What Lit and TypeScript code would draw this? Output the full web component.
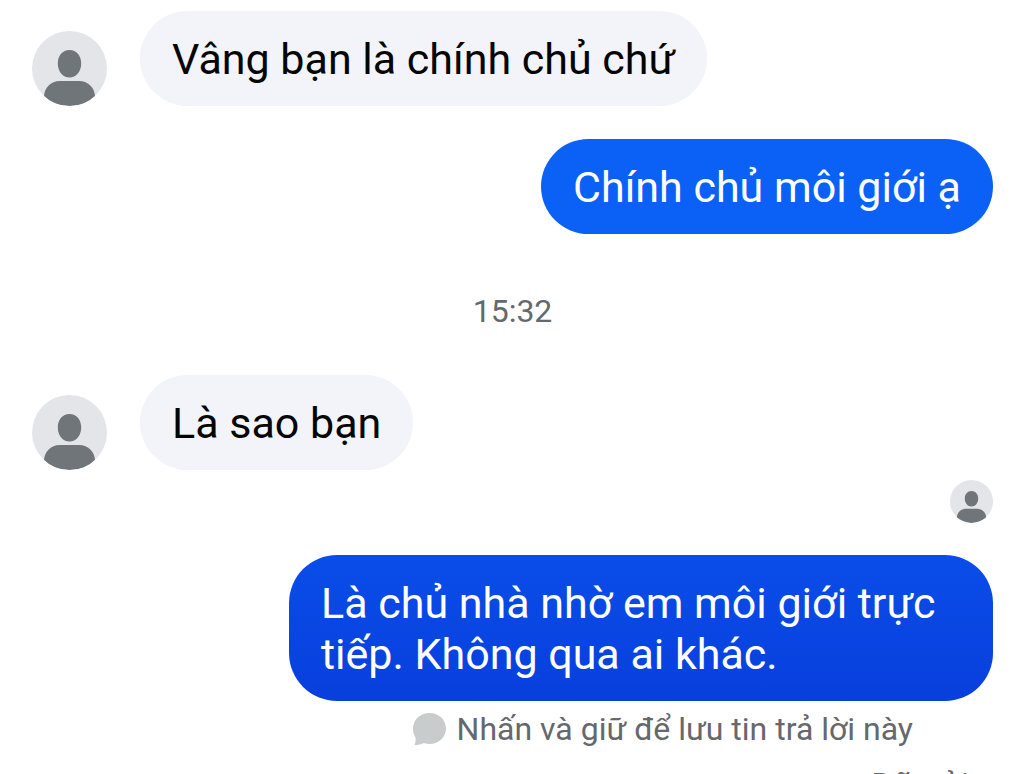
import { LitElement, html, css } from "lit";
import { customElement, property } from "lit/decorators.js";

@customElement("user-avatar")
export class UserAvatar extends LitElement {
  static styles = css`
    :host {
      display: block;
      flex: none;
      width: 75px;
      height: 75px;
      border-radius: 50%;
      overflow: hidden;
      background: #e3e5e9;
    }
    svg {
      display: block;
      width: 100%;
      height: 100%;
    }
  `;

  render() {
    return html`<svg viewBox="0 0 75 75" role="img" aria-label="Ảnh đại diện">
      <path
        fill="#70757a"
        d="M37.5 19c7 0 11.7 5.600 11.700 13.400 0 8-5 14-11.700 14s-11.700-6-11.700-14c0-7.800 4.700-13.400 11.700-13.400z"
      />
      <path
        fill="#70757a"
        d="M12 66C12 57 18.500 50 28 50H47C56.500 50 63 57 63 66C56 72 47 75 37.500 75S19 72 12 66z"
      />
    </svg>`;
  }
}

@customElement("chat-message")
export class ChatMessage extends LitElement {
  @property({ reflect: true }) side: "in" | "out" = "in";
  @property({ reflect: true }) tone = "";
  @property() text = "";

  static styles = css`
    :host {
      display: flex;
      align-items: flex-end;
      gap: 33px;
    }
    :host([side="out"]) {
      justify-content: flex-end;
    }
    .bubble {
      box-sizing: border-box;
      max-width: 704px;
      margin: 0;
      padding: 23px 32px 21px;
      border-radius: 48px;
      background: #f3f4f9;
      color: #050505;
      font-size: 43px;
      line-height: 51px;
    }
    :host([side="out"]) .bubble {
      background: #0b61f6;
      color: #fff;
    }
    :host([tone="deep"]) .bubble {
      background: linear-gradient(#0a4de8, #083fdd);
    }
  `;

  render() {
    return html`${this.side === "in" ? html`<user-avatar></user-avatar>` : ""}
      <p class="bubble">${this.text}</p>`;
  }
}

@customElement("app-root")
export class AppRoot extends LitElement {
  static styles = css`
    :host {
      display: block;
      box-sizing: border-box;
      height: 100vh;
      overflow: hidden;
      background: #fff;
      font-family: Roboto, "Noto Sans", sans-serif;
    }
    .thread {
      display: flex;
      flex-direction: column;
      padding: 11px 31px 0 32px;
    }
    .reply {
      margin-top: 33px;
    }
    .time {
      margin: 57px 0 44px;
      text-align: center;
      color: #65686c;
      font-size: 32px;
      line-height: 40px;
    }
    .seen {
      width: 43px;
      height: 43px;
      margin: 10px 0 32px;
      align-self: flex-end;
    }
    .hint {
      display: flex;
      align-items: center;
      align-self: flex-end;
      gap: 11px;
      margin: 8px 80px 0 0;
      padding: 0;
      border: 0;
      background: none;
      color: #65686c;
      font: inherit;
      font-size: 32px;
      line-height: 40px;
    }
    .hint svg {
      width: 33px;
      height: 33px;
    }
    .status {
      align-self: flex-end;
      margin: 16px 24px 0 0;
      color: #65686c;
      font-size: 34px;
      line-height: 40px;
    }
  `;

  render() {
    return html`<main class="thread">
      <chat-message text="Vâng bạn là chính chủ chứ"></chat-message>
      <chat-message class="reply" side="out" text="Chính chủ môi giới ạ"></chat-message>
      <time class="time">15:32</time>
      <chat-message text="Là sao bạn"></chat-message>
      <user-avatar class="seen"></user-avatar>
      <chat-message
        side="out"
        tone="deep"
        text="Là chủ nhà nhờ em môi giới trực tiếp. Không qua ai khác."
      ></chat-message>
      <button class="hint" type="button">
        <svg viewBox="0 0 33 33" aria-hidden="true">
          <path
            fill="#c9cccd"
            d="M16.500 0C26 0 33 7 33 15.500S26 31 16.500 31c-2 0-4-.300-5.700-1C8 31.500 5 32 1.500 32c1-2.500 1.300-5 1-7.500C.800 22 0 19 0 15.500 0 7 7 0 16.500 0z"
          />
        </svg>
        <span>Nhấn và giữ để lưu tin trả lời này</span>
      </button>
      <div class="status">Đã gửi</div>
    </main>`;
  }
}
